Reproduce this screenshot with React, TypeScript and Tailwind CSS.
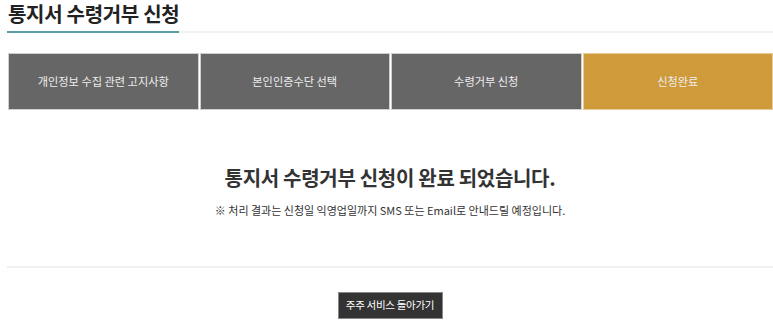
import React from 'react';

const steps = ['개인정보 수집 관련 고지사항', '본인인증수단 선택', '수령거부 신청', '신청완료'];

export default function App() {
  return (
    <div
      className="w-[773px] h-[331px] overflow-hidden bg-white pl-[7px] text-[#333]"
      style={{ fontFamily: '"Noto Sans CJK KR", "Noto Sans", sans-serif' }}
    >
      <div className="relative border-b-2 border-[#f2f2f2] h-[33px]">
        <h2 className="text-[20px] font-bold leading-[28px] tracking-[-0.3px] pl-px text-[#222]">
          통지서 수령거부 신청
        </h2>
        <span className="absolute left-0 -bottom-[2px] w-[172px] h-[2px] bg-[#5d9ba3]" />
      </div>

      <ul className="flex gap-[1px] mt-[20px] ml-px">
        {steps.map((s, i) => (
          <li
            key={s}
            className={
              'w-[191px] h-[57px] border flex items-center justify-center text-[11.2px] text-[#eee] ' +
              (i === 3 ? 'bg-[#cf9a3a] border-[#e8cc9c]' : 'bg-[#666] border-[#cfcfcf]')
            }
          >
            {s}
          </li>
        ))}
      </ul>

      <div className="text-center mt-[53px]">
        <p className="text-[20px] font-bold leading-[30px] tracking-[-0.3px] text-[#333]">
          통지서 수령거부 신청이 완료 되었습니다.
        </p>
        <p className="text-[11px] leading-[18px] mt-[8px] text-[#333]">
          ※ 처리 결과는 신청일 익영업일까지 SMS 또는 Email로 안내드릴 예정입니다.
        </p>
      </div>

      <div className="border-t-2 border-[#f0f0f0] mt-[47px]" />

      <div className="flex justify-center mt-[24px]">
        <button className="h-[27px] w-[105px] bg-[#333] border border-[#888] text-white text-[10.5px] tracking-[-0.3px] leading-none">
          주주 서비스 돌아가기
        </button>
      </div>
    </div>
  );
}
